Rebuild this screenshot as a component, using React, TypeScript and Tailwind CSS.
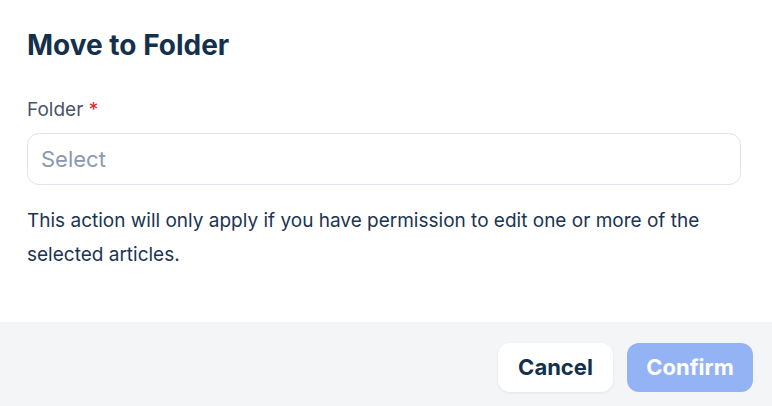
const App = () => {
  return (
    <div className="w-[772px] h-[406px] bg-white flex flex-col font-['Inter',sans-serif] overflow-hidden">
      <div className="flex-1 px-[27px] pt-[28px]">
        <h2 className="text-[28px] leading-[34px] font-bold text-[#14304b]">Move to Folder</h2>
        <div className="mt-[36px]">
          <label className="block text-[19px] leading-[24px] text-[#4a5568]">
            Folder <span className="text-[#e02424]">*</span>
          </label>
          <div className="mt-[11px] h-[52px] w-[714px] rounded-[12px] border border-[#dfe3ea] flex items-center px-[13px]">
            <span className="text-[22px] text-[#8a9aae]">Select</span>
          </div>
        </div>
        <p className="mt-[19px] text-[19px] leading-[34px] text-[#1b3451]">
          This action will only apply if you have permission to edit one or more of the selected articles.
        </p>
      </div>
      <div className="h-[84px] bg-[#f4f5f7] flex justify-end items-start gap-[14px] pt-[21px] pr-[19px]">
        <button className="h-[49px] w-[115px] rounded-[12px] bg-white shadow-[0_1px_3px_rgba(0,0,0,0.08)] text-[22px] font-bold text-[#14304b]">
          Cancel
        </button>
        <button className="h-[49px] w-[126px] rounded-[12px] bg-[#93b3f5] text-[22px] font-bold text-white">
          Confirm
        </button>
      </div>
    </div>
  );
};

export default App;
